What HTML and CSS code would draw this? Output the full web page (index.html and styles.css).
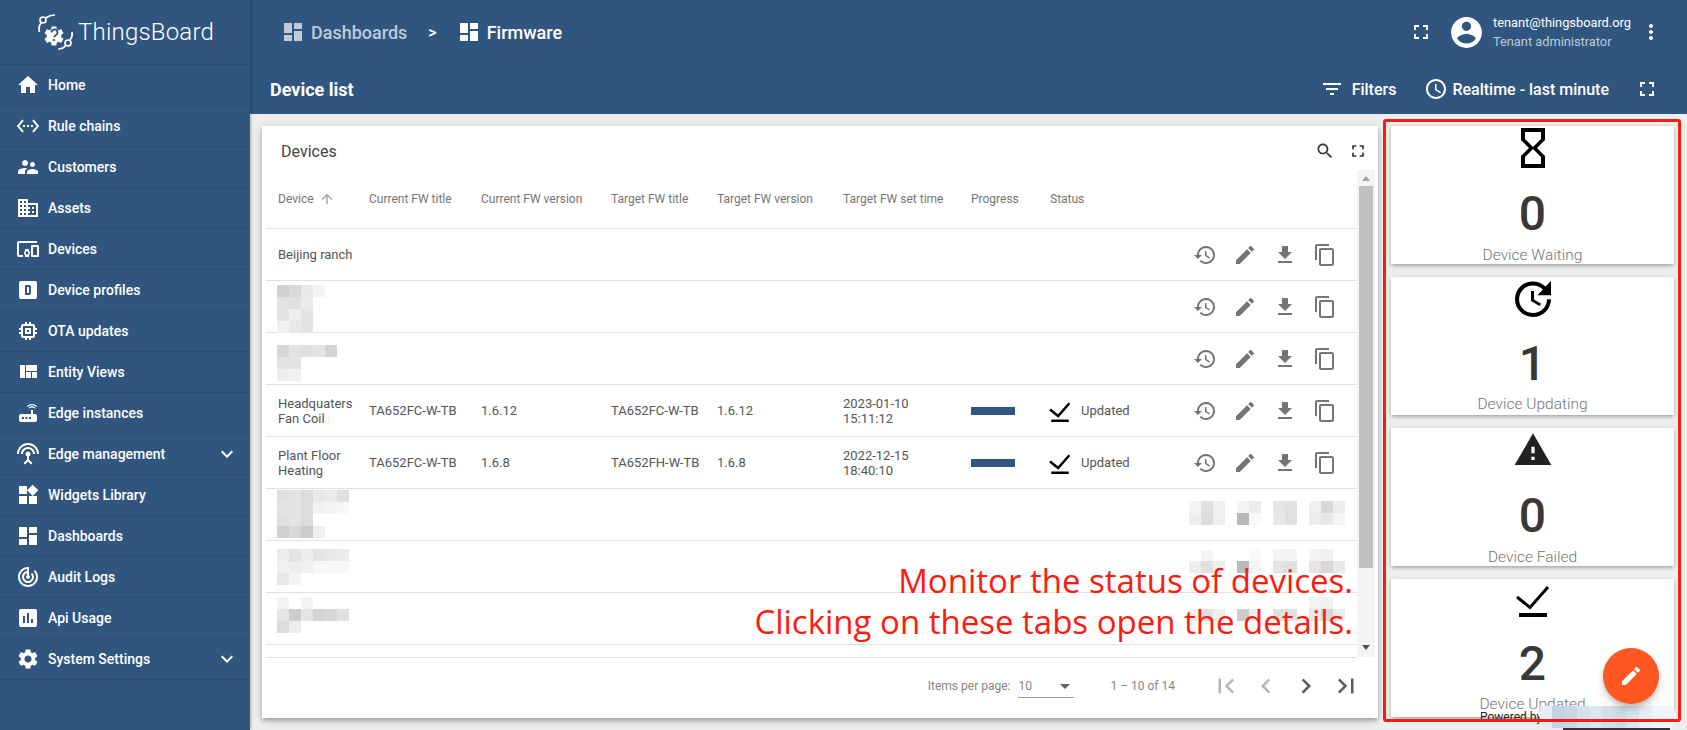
FILE: index.html
```html
<!DOCTYPE html>
<html lang="en">
<head>
  <meta charset="UTF-8" />
  <title>ThingsBoard | Firmware</title>
  <link rel="stylesheet" href="styles.css">
</head>
<body>
  <svg width="0" height="0" class="defs">
    <symbol id="i-full" viewBox="0 0 24 24"><path d="M7 14H5v5h5v-2H7v-3zm-2-4h2V7h3V5H5v5zm12 7h-3v2h5v-5h-2v3zM14 5v2h3v3h2V5h-5z"/></symbol>
    <symbol id="i-dash" viewBox="0 0 24 24"><path d="M3 13h8V3H3v10zm0 8h8v-6H3v6zm10 0h8V11h-8v10zm0-18v6h8V3h-8z"/></symbol>
    <symbol id="i-more" viewBox="0 0 24 24"><path d="M16.59 8.59L12 13.17 7.41 8.59 6 10l6 6 6-6z"/></symbol>
    <symbol id="i-history" viewBox="0 0 24 24"><path d="M13 3c-4.97 0-9 4.03-9 9H1l3.89 3.89.07.14L9 12H6c0-3.87 3.13-7 7-7s7 3.13 7 7-3.13 7-7 7c-1.93 0-3.68-.79-4.94-2.06l-1.42 1.42C8.27 19.99 10.51 21 13 21c4.97 0 9-4.03 9-9s-4.03-9-9-9zm-1 5v5l4.28 2.54.72-1.21-3.5-2.08V8H12z"/></symbol>
    <symbol id="i-edit" viewBox="0 0 24 24"><path d="M3 17.25V21h3.75L17.81 9.94l-3.75-3.75L3 17.25zM20.71 7.04c.39-.39.39-1.02 0-1.41l-2.34-2.34c-.39-.39-1.02-.39-1.41 0l-1.83 1.83 3.75 3.75 1.83-1.83z"/></symbol>
    <symbol id="i-down" viewBox="0 0 24 24"><path d="M19 9h-4V3H9v6H5l7 7 7-7zM5 18v2h14v-2H5z"/></symbol>
    <symbol id="i-copy" viewBox="0 0 24 24"><path d="M16 1H4c-1.1 0-2 .9-2 2v14h2V3h12V1zm3 4H8c-1.1 0-2 .9-2 2v14c0 1.1.9 2 2 2h11c1.1 0 2-.9 2-2V7c0-1.1-.9-2-2-2zm0 16H8V7h11v14z"/></symbol>
    <symbol id="i-check" viewBox="0 0 48 48"><path d="M8 20l13 10.5L39 10" fill="none" stroke="currentColor"/><rect x="10" y="36" width="28" height="4" fill="currentColor"/></symbol>
  </svg>

  <aside class="sidebar">
    <div class="logo">
      <svg class="logo-mark" viewBox="0 0 55 48" width="55" height="48">
        <g transform="translate(12 16) scale(1)" fill="#fff"><path d="M19.14 12.94c.04-.3.06-.61.06-.94 0-.32-.02-.64-.07-.94l2.03-1.58c.18-.14.23-.41.12-.61l-1.92-3.32c-.12-.22-.37-.29-.59-.22l-2.39.96c-.5-.38-1.03-.7-1.62-.94l-.36-2.54c-.04-.24-.24-.41-.48-.41h-3.84c-.24 0-.43.17-.47.41l-.36 2.54c-.59.24-1.13.57-1.62.94l-2.39-.96c-.22-.08-.47 0-.59.22L2.74 8.87c-.12.21-.08.47.12.61l2.03 1.58c-.05.3-.09.63-.09.94s.02.64.07.94l-2.03 1.58c-.18.14-.23.41-.12.61l1.92 3.32c.12.22.37.29.59.22l2.39-.96c.5.38 1.03.7 1.62.94l.36 2.54c.05.24.24.41.48.41h3.84c.24 0 .44-.17.47-.41l.36-2.54c.59-.24 1.13-.56 1.62-.94l2.39.96c.22.08.47 0 .59-.22l1.92-3.32c.12-.22.07-.47-.12-.61l-2.01-1.58z"/></g>
        <path d="M21.5 24.5a3 3 0 1 1 4 2.8l-1.5 2M23.8 31v2" fill="none" stroke="#305680" stroke-width="1.8"/>
        <g fill="none" stroke="#fff" stroke-width="1.7">
          <circle cx="13" cy="12" r="3"/>
          <circle cx="38" cy="35" r="3"/>
          <path d="M15.5 10Q20 7 25 7M11 15Q8 19 9.5 24M35.5 37.5Q33 41 28 41M40 32Q43 28 42 24"/>
        </g>
      </svg>
      <span class="logo-text">ThingsBoard</span>
    </div>
    <nav class="menu">
      <a class="menu-item"><svg class="icon" viewBox="0 0 24 24"><path d="M10 20v-6h4v6h5v-8h3L12 3 2 12h3v8z"/></svg>Home</a>
      <a class="menu-item"><svg class="icon" viewBox="0 0 24 24"><path d="M7.77 6.76L6.23 5.48.82 12l5.41 6.52 1.54-1.28L3.42 12l4.35-5.24zM7 13h2v-2H7v2zm10-2h-2v2h2v-2zm-6 2h2v-2h-2v2zm6.77-7.52l-1.54 1.28L20.58 12l-4.35 5.24 1.54 1.28L23.18 12l-5.41-6.52z"/></svg>Rule chains</a>
      <a class="menu-item"><svg class="icon" viewBox="0 0 24 24"><path d="M16.5 12c1.38 0 2.49-1.12 2.49-2.5S17.88 7 16.5 7C15.12 7 14 8.12 14 9.5s1.12 2.5 2.5 2.5zM9 11c1.66 0 2.99-1.34 2.99-3S10.66 5 9 5C7.34 5 6 6.34 6 8s1.34 3 3 3zm7.5 3c-1.83 0-5.5.92-5.5 2.75V19h11v-2.25c0-1.83-3.67-2.75-5.5-2.75zM9 13c-2.33 0-7 1.17-7 3.5V19h7v-2.25c0-.85.33-2.34 2.37-3.47C10.5 13.1 9.66 13 9 13z"/></svg>Customers</a>
      <a class="menu-item"><svg class="icon" viewBox="0 0 24 24"><path d="M12 7V3H2v18h20V7H12zM6 19H4v-2h2v2zm0-4H4v-2h2v2zm0-4H4V9h2v2zm0-4H4V5h2v2zm4 12H8v-2h2v2zm0-4H8v-2h2v2zm0-4H8V9h2v2zm0-4H8V5h2v2zm10 12h-8v-2h2v-2h-2v-2h2v-2h-2V9h8v10zm-2-8h-2v2h2v-2zm0 4h-2v2h2v-2z"/></svg>Assets</a>
      <a class="menu-item"><svg class="icon" viewBox="0 0 24 24"><path d="M3 6h18V4H3c-1.1 0-2 .9-2 2v12c0 1.1.9 2 2 2h4v-2H3V6zm10 6H9v1.78c-.61.55-1 1.33-1 2.22s.39 1.67 1 2.22V20h4v-1.78c.61-.55 1-1.34 1-2.22s-.39-1.67-1-2.22V12zm-2 5.5c-.83 0-1.5-.67-1.5-1.5s.67-1.5 1.5-1.5 1.5.67 1.5 1.5-.67 1.5-1.5 1.5zM22 8h-6c-.5 0-1 .5-1 1v10c0 .5.5 1 1 1h6c.5 0 1-.5 1-1V9c0-.5-.5-1-1-1zm-1 10h-4v-8h4v8z"/></svg>Devices</a>
      <a class="menu-item"><svg class="icon" viewBox="0 0 24 24"><path fill-rule="evenodd" d="M9 7v10h4a2 2 0 0 0 2-2V9a2 2 0 0 0-2-2H9zm2 2h2v6h-2V9zM5 3h14a2 2 0 0 1 2 2v14a2 2 0 0 1-2 2H5a2 2 0 0 1-2-2V5a2 2 0 0 1 2-2z"/></svg>Device profiles</a>
      <a class="menu-item"><svg class="icon" viewBox="0 0 24 24"><path d="M15 9H9v6h6V9zm-2 4h-2v-2h2v2zm8-2V9h-2V7c0-1.1-.9-2-2-2h-2V3h-2v2h-2V3H9v2H7c-1.1 0-2 .9-2 2v2H3v2h2v2H3v2h2v2c0 1.1.9 2 2 2h2v2h2v-2h2v2h2v-2h2c1.1 0 2-.9 2-2v-2h2v-2h-2v-2h2zm-4 6H7V7h10v10z"/></svg>OTA updates</a>
      <a class="menu-item"><svg class="icon" viewBox="0 0 24 24"><path d="M10 18h5v-6h-5v6zm-6 0h5V5H4v13zm12 0h5v-6h-5v6zM10 5v6h11V5H10z"/></svg>Entity Views</a>
      <a class="menu-item"><svg class="icon" viewBox="0 0 24 24"><path d="M20.2 5.9l.8-.8C19.6 3.7 17.8 3 16 3s-3.6.7-5 2.1l.8.8C13 4.8 14.5 4.2 16 4.2s3 .6 4.2 1.7zm-.9.8c-.9-.9-2.1-1.4-3.3-1.4s-2.4.5-3.3 1.4l.8.8c.7-.7 1.6-1 2.5-1 .9 0 1.8.3 2.5 1l.8-.8zM19 13h-2V9h-2v4H5c-1.1 0-2 .9-2 2v4c0 1.1.9 2 2 2h14c1.1 0 2-.9 2-2v-4c0-1.1-.9-2-2-2zM8 18H6v-2h2v2zm3.5 0h-2v-2h2v2zm3.5 0h-2v-2h2v2z"/></svg>Edge instances</a>
      <a class="menu-item"><svg class="icon" viewBox="0 0 24 24"><path d="M12 5c-3.87 0-7 3.13-7 7h2c0-2.76 2.24-5 5-5s5 2.24 5 5h2c0-3.87-3.13-7-7-7zm1 9.29c.88-.39 1.5-1.26 1.5-2.29 0-1.38-1.12-2.5-2.5-2.5S9.5 10.62 9.5 12c0 1.02.62 1.9 1.5 2.29v3.3L7.59 21 9 22.41l3-3 3 3L16.41 21 13 17.59v-3.3zM12 1C5.93 1 1 5.93 1 12h2c0-4.97 4.03-9 9-9s9 4.03 9 9h2c0-6.07-4.93-11-11-11z"/></svg>Edge management<svg class="icon chevron"><use href="#i-more"/></svg></a>
      <a class="menu-item"><svg class="icon" viewBox="0 0 24 24"><path d="M13 13v8h8v-8h-8zM3 21h8v-8H3v8zM3 3v8h8V3H3zm13.66-1.31L11 7.34 16.66 13l5.66-5.66-5.66-5.65z"/></svg>Widgets Library</a>
      <a class="menu-item"><svg class="icon"><use href="#i-dash"/></svg>Dashboards</a>
      <a class="menu-item"><svg class="icon" viewBox="0 0 24 24"><path d="M19.07 4.93l-1.41 1.41C19.1 7.79 20 9.79 20 12c0 4.42-3.58 8-8 8s-8-3.58-8-8c0-4.08 3.05-7.44 7-7.93v2.02C8.16 6.57 6 9.03 6 12c0 3.31 2.69 6 6 6s6-2.69 6-6c0-1.66-.67-3.16-1.76-4.24l-1.41 1.41C15.55 9.9 16 10.9 16 12c0 2.21-1.79 4-4 4s-4-1.79-4-4c0-1.86 1.28-3.41 3-3.86v2.14c-.6.35-1 .98-1 1.72 0 1.1.9 2 2 2s2-.9 2-2c0-.74-.4-1.38-1-1.72V2h-1C6.48 2 2 6.48 2 12s4.48 10 10 10 10-4.48 10-10c0-2.76-1.12-5.26-2.93-7.07z"/></svg>Audit Logs</a>
      <a class="menu-item"><svg class="icon" viewBox="0 0 24 24"><path d="M19 3H5c-1.1 0-2 .9-2 2v14c0 1.1.9 2 2 2h14c1.1 0 2-.9 2-2V5c0-1.1-.9-2-2-2zM9 17H7v-7h2v7zm4 0h-2V7h2v10zm4 0h-2v-4h2v4z"/></svg>Api Usage</a>
      <a class="menu-item"><svg class="icon" viewBox="0 0 24 24"><path d="M19.14 12.94c.04-.3.06-.61.06-.94 0-.32-.02-.64-.07-.94l2.03-1.58c.18-.14.23-.41.12-.61l-1.92-3.32c-.12-.22-.37-.29-.59-.22l-2.39.96c-.5-.38-1.03-.7-1.62-.94l-.36-2.54c-.04-.24-.24-.41-.48-.41h-3.84c-.24 0-.43.17-.47.41l-.36 2.54c-.59.24-1.13.57-1.62.94l-2.39-.96c-.22-.08-.47 0-.59.22L2.74 8.87c-.12.21-.08.47.12.61l2.03 1.58c-.05.3-.09.63-.09.94s.02.64.07.94l-2.03 1.58c-.18.14-.23.41-.12.61l1.92 3.32c.12.22.37.29.59.22l2.39-.96c.5.38 1.03.7 1.62.94l.36 2.54c.05.24.24.41.48.41h3.84c.24 0 .44-.17.47-.41l.36-2.54c.59-.24 1.13-.56 1.62-.94l2.39.96c.22.08.47 0 .59-.22l1.92-3.32c.12-.22.07-.47-.12-.61l-2.01-1.58zM12 15.6c-1.98 0-3.6-1.62-3.6-3.6s1.62-3.6 3.6-3.6 3.6 1.62 3.6 3.6-1.62 3.6-3.6 3.6z"/></svg>System Settings<svg class="icon chevron"><use href="#i-more"/></svg></a>
    </nav>
  </aside>

  <main class="main">
    <header class="topbar">
      <div class="crumbs">
        <span class="crumb crumb-muted"><svg class="icon"><use href="#i-dash"/></svg>Dashboards</span>
        <span class="crumb-sep">&gt;</span>
        <span class="crumb"><svg class="icon"><use href="#i-dash"/></svg>Firmware</span>
      </div>
      <div class="user-area">
        <svg class="icon"><use href="#i-full"/></svg>
        <svg class="avatar" viewBox="0 0 24 24"><path d="M12 2C6.48 2 2 6.48 2 12s4.48 10 10 10 10-4.48 10-10S17.52 2 12 2zm0 3c1.66 0 3 1.34 3 3s-1.34 3-3 3-3-1.34-3-3 1.34-3 3-3zm0 14.2c-2.5 0-4.71-1.28-6-3.22.03-1.99 4-3.08 6-3.08 1.99 0 5.97 1.09 6 3.08-1.29 1.94-3.5 3.22-6 3.22z"/></svg>
        <div class="user-info">
          <div class="user-mail">tenant@thingsboard.org</div>
          <div class="user-role">Tenant administrator</div>
        </div>
        <svg class="icon" viewBox="0 0 24 24"><path d="M12 8c1.1 0 2-.9 2-2s-.9-2-2-2-2 .9-2 2 .9 2 2 2zm0 2c-1.1 0-2 .9-2 2s.9 2 2 2 2-.9 2-2-.9-2-2-2zm0 6c-1.1 0-2 .9-2 2s.9 2 2 2 2-.9 2-2-.9-2-2-2z"/></svg>
      </div>
    </header>
    <div class="subbar">
      <div class="state-title">Device list</div>
      <div class="sub-actions">
        <span class="sub-btn filters"><svg class="icon" viewBox="0 0 24 24"><path d="M10 18h4v-2h-4v2zM3 6v2h18V6H3zm3 7h12v-2H6v2z"/></svg>Filters</span>
        <span class="sub-btn realtime"><svg class="icon" viewBox="0 0 24 24"><path d="M11.99 2C6.47 2 2 6.48 2 12s4.47 10 9.99 10C17.52 22 22 17.52 22 12S17.52 2 11.99 2zM12 20c-4.42 0-8-3.58-8-8s3.58-8 8-8 8 3.58 8 8-3.58 8-8 8zm.5-13H11v6l5.25 3.15.75-1.23-4.5-2.67z"/></svg>Realtime - last minute</span>
        <svg class="icon"><use href="#i-full"/></svg>
      </div>
    </div>

    <div class="content">
      <section class="panel">
        <div class="panel-head">
          <span class="panel-title">Devices</span>
          <span class="panel-tools">
            <svg class="tool" viewBox="0 0 24 24"><path d="M15.5 14h-.79l-.28-.27C15.41 12.59 16 11.11 16 9.5 16 5.91 13.09 3 9.5 3S3 5.91 3 9.5 5.91 16 9.5 16c1.61 0 3.09-.59 4.23-1.57l.27.28v.79l5 4.99L20.49 19l-4.99-5zm-6 0C7.01 14 5 11.99 5 9.5S7.01 5 9.5 5 14 7.01 14 9.5 11.99 14 9.5 14z"/></svg>
            <svg class="tool"><use href="#i-full"/></svg>
          </span>
        </div>

        <div class="table-wrap">
          <div class="table">
            <div class="row row-head">
              <span>Device <svg class="sort" viewBox="0 0 24 24"><path d="M4 12l1.41 1.41L11 7.83V20h2V7.83l5.58 5.59L20 12l-8-8-8 8z"/></svg></span>
              <span>Current FW title</span><span>Current FW version</span><span>Target FW title</span><span>Target FW version</span><span>Target FW set time</span><span>Progress</span><span>Status</span><span></span>
            </div>
            <div class="row">
              <span class="cell-name">Beijing ranch</span><span></span><span></span><span></span><span></span><span></span><span></span><span></span>
              <span class="row-actions"><svg><use href="#i-history"/></svg><svg><use href="#i-edit"/></svg><svg><use href="#i-down"/></svg><svg><use href="#i-copy"/></svg></span>
            </div>
            <div class="row">
              <span></span><span></span><span></span><span></span><span></span><span></span><span></span><span></span>
              <span class="row-actions"><svg><use href="#i-history"/></svg><svg><use href="#i-edit"/></svg><svg><use href="#i-down"/></svg><svg><use href="#i-copy"/></svg></span>
            </div>
            <div class="row">
              <span></span><span></span><span></span><span></span><span></span><span></span><span></span><span></span>
              <span class="row-actions"><svg><use href="#i-history"/></svg><svg><use href="#i-edit"/></svg><svg><use href="#i-down"/></svg><svg><use href="#i-copy"/></svg></span>
            </div>
            <div class="row">
              <span class="cell-name">Headquaters Fan Coil</span><span>TA652FC-W-TB</span><span>1.6.12</span><span>TA652FC-W-TB</span><span>1.6.12</span><span>2023-01-10<br>15:11:12</span>
              <span><i class="progress"></i></span>
              <span class="status"><svg><use href="#i-check"/></svg>Updated</span>
              <span class="row-actions"><svg><use href="#i-history"/></svg><svg><use href="#i-edit"/></svg><svg><use href="#i-down"/></svg><svg><use href="#i-copy"/></svg></span>
            </div>
            <div class="row">
              <span class="cell-name">Plant Floor Heating</span><span>TA652FC-W-TB</span><span>1.6.8</span><span>TA652FH-W-TB</span><span>1.6.8</span><span>2022-12-15<br>18:40:10</span>
              <span><i class="progress"></i></span>
              <span class="status"><svg><use href="#i-check"/></svg>Updated</span>
              <span class="row-actions"><svg><use href="#i-history"/></svg><svg><use href="#i-edit"/></svg><svg><use href="#i-down"/></svg><svg><use href="#i-copy"/></svg></span>
            </div>
            <div class="row"></div>
            <div class="row"></div>
            <div class="row"></div>
            <div class="row row-cut"></div>
          </div>
          <div class="scrollbar">
            <i class="arrow arrow-up"></i>
            <i class="thumb"></i>
            <i class="arrow arrow-down"></i>
          </div>
        </div>

        <div class="paginator">
          <span class="page-label">Items per page:</span>
          <span class="page-select">10<i class="caret"></i></span>
          <span class="page-range">1 – 10 of 14</span>
          <span class="page-nav">
            <svg class="off" viewBox="0 0 24 24"><path d="M18.41 16.59L13.82 12l4.59-4.59L17 6l-6 6 6 6zM6 6h2v12H6z"/></svg>
            <svg class="off" viewBox="0 0 24 24"><path d="M15.41 7.41L14 6l-6 6 6 6 1.41-1.41L10.83 12z"/></svg>
            <svg viewBox="0 0 24 24"><path d="M10 6L8.59 7.41 13.17 12l-4.58 4.59L10 18l6-6z"/></svg>
            <svg viewBox="0 0 24 24"><path d="M5.59 7.41L10.18 12l-4.59 4.59L7 18l6-6-6-6zM16 6h2v12h-2z"/></svg>
          </span>
        </div>
      </section>

      <section class="tiles">
        <div class="tile">
          <svg class="tile-icon" viewBox="0 0 24 24"><path d="M6 2v6h.01L6 8.01 10 12l-4 4 .01.01H6V22h12v-5.99h-.01L18 16l-4-4 4-3.99-.01-.01H18V2H6zm10 14.5V20H8v-3.5l4-4 4 4zm-4-5l-4-4V4h8v3.5l-4 4z"/></svg>
          <div class="tile-num">0</div>
          <div class="tile-label">Device Waiting</div>
        </div>
        <div class="tile tile-second">
          <svg class="tile-icon" viewBox="0 0 24 24"><path d="M21 10.12h-6.78l2.74-2.82c-2.73-2.7-7.15-2.8-9.88-.1-2.73 2.71-2.73 7.08 0 9.79s7.15 2.71 9.88 0C18.32 15.65 19 14.08 19 12.1h2c0 1.98-.88 4.55-2.64 6.29-3.51 3.48-9.21 3.48-12.72 0-3.5-3.47-3.53-9.11-.02-12.58s9.14-3.47 12.65 0L21 3v7.12zM12.5 8v4.25l3.5 2.08-.72 1.21L11 13V8h1.5z"/></svg>
          <div class="tile-num">1</div>
          <div class="tile-label">Device Updating</div>
        </div>
        <div class="tile">
          <svg class="tile-icon warn" viewBox="0 0 24 24"><path d="M1 21h22L12 2 1 21zm12-3h-2v-2h2v2zm0-4h-2v-4h2v4z"/></svg>
          <div class="tile-num">0</div>
          <div class="tile-label">Device Failed</div>
        </div>
        <div class="tile tile-last">
          <svg class="tile-icon"><use href="#i-check"/></svg>
          <div class="tile-num">2</div>
          <div class="tile-label">Device Updated</div>
        </div>
      </section>
    </div>
  </main>

  <!-- things painted over the screenshot: redaction blocks, note, red frame -->
  <svg class="mosaic" width="1687" height="730">
    <rect x="277" y="285" fill="#d0d0d0"/><rect x="289" y="285" fill="#d8d8d8"/><rect x="301" y="285" fill="#e8e8e8"/><rect x="313" y="285" fill="#f4f4f4"/>
    <rect x="277" y="297" fill="#e2e2e2"/><rect x="289" y="297" fill="#e0e0e0"/><rect x="301" y="297" fill="#eaeaea"/>
    <rect x="277" y="309" fill="#e4e4e4"/><rect x="289" y="309" fill="#eeeeee"/><rect x="301" y="309" fill="#e4e4e4"/>
    <rect x="277" y="321" fill="#f2f2f2"/><rect x="289" y="321" fill="#e8e8e8"/><rect x="301" y="321" fill="#e4e4e4"/>

    <rect x="277" y="345" fill="#d8d8d8"/><rect x="289" y="345" fill="#e4e4e4"/><rect x="301" y="345" fill="#e0e0e0"/><rect x="313" y="345" fill="#e4e4e4"/><rect x="325" y="345" fill="#d4d4d4"/>
    <rect x="277" y="357" fill="#e4e4e4"/><rect x="289" y="357" fill="#e4e4e4"/>
    <rect x="277" y="369" fill="#eeeeee"/><rect x="289" y="369" fill="#f0f0f0"/>

    <rect x="277" y="490" fill="#e0e0e0"/><rect x="289" y="490" fill="#e4e4e4"/><rect x="301" y="490" fill="#dcdcdc"/><rect x="313" y="490" fill="#e8e8e8"/><rect x="325" y="490" fill="#ececec"/><rect x="337" y="490" fill="#e0e0e0"/>
    <rect x="277" y="502" fill="#e4e4e4"/><rect x="289" y="502" fill="#e4e4e4"/><rect x="301" y="502" fill="#dcdcdc"/><rect x="313" y="502" fill="#f2f2f2"/><rect x="325" y="502" fill="#f4f4f4"/><rect x="337" y="502" fill="#f8f8f8"/>
    <rect x="277" y="514" fill="#e0e0e0"/><rect x="289" y="514" fill="#e4e4e4"/><rect x="301" y="514" fill="#dcdcdc"/>
    <rect x="277" y="526" fill="#d0d0d0"/><rect x="289" y="526" fill="#d8d8d8"/><rect x="301" y="526" fill="#cccccc"/><rect x="313" y="526" fill="#f0f0f0"/>

    <rect x="277" y="549" fill="#ececec"/><rect x="289" y="549" fill="#e4e4e4"/><rect x="301" y="549" fill="#ececec"/><rect x="313" y="549" fill="#e4e4e4"/><rect x="325" y="549" fill="#e8e8e8"/><rect x="337" y="549" fill="#ececec"/>
    <rect x="277" y="561" fill="#f0f0f0"/><rect x="289" y="561" fill="#ececec"/><rect x="301" y="561" fill="#f0f0f0"/><rect x="313" y="561" fill="#f8f8f8"/><rect x="325" y="561" fill="#f8f8f8"/><rect x="337" y="561" fill="#f8f8f8"/>
    <rect x="277" y="573" fill="#e8e8e8"/><rect x="289" y="573" fill="#f4f4f4"/>

    <rect x="277" y="597" fill="#f4f4f4"/><rect x="301" y="597" fill="#f4f4f4"/>
    <rect x="277" y="609" fill="#e4e4e4"/><rect x="289" y="609" fill="#cccccc"/><rect x="301" y="609" fill="#e4e4e4"/><rect x="313" y="609" fill="#d4d4d4"/><rect x="325" y="609" fill="#d8d8d8"/><rect x="337" y="609" fill="#e0e0e0"/>
    <rect x="277" y="621" fill="#dcdcdc"/><rect x="289" y="621" fill="#eeeeee"/>

    <rect x="1189" y="501" fill="#f4f4f4"/><rect x="1201" y="501" fill="#e0e0e0"/><rect x="1213" y="501" fill="#f0f0f0"/>
    <rect x="1189" y="513" fill="#eeeeee"/><rect x="1201" y="513" fill="#dcdcdc"/><rect x="1213" y="513" fill="#eeeeee"/>
    <rect x="1237" y="501" fill="#f4f4f4"/><rect x="1249" y="501" fill="#ececec"/><rect x="1237" y="513" fill="#b8b8b8"/><rect x="1249" y="513" fill="#fafafa"/>
    <rect x="1273" y="501" fill="#e4e4e4"/><rect x="1285" y="501" fill="#e0e0e0"/><rect x="1273" y="513" fill="#e8e8e8"/><rect x="1285" y="513" fill="#e0e0e0"/>
    <rect x="1309" y="501" fill="#f0f0f0"/><rect x="1321" y="501" fill="#d8d8d8"/><rect x="1333" y="501" fill="#ececec"/>
    <rect x="1309" y="513" fill="#ececec"/><rect x="1321" y="513" fill="#e8e8e8"/><rect x="1333" y="513" fill="#f4f4f4"/>

    <rect x="1201" y="550" fill="#f4f4f4"/><rect x="1189" y="561" fill="#eeeeee"/><rect x="1201" y="561" fill="#e0e0e0"/><rect x="1213" y="561" fill="#eeeeee"/>
    <rect x="1237" y="561" fill="#bbbbbb"/><rect x="1249" y="561" fill="#f4f4f4"/><rect x="1249" y="549" fill="#f8f8f8"/>
    <rect x="1273" y="561" fill="#e4e4e4"/><rect x="1285" y="561" fill="#e0e0e0"/><rect x="1273" y="549" fill="#f4f4f4"/><rect x="1285" y="549" fill="#f4f4f4"/>
    <rect x="1309" y="561" fill="#e4e4e4"/><rect x="1321" y="561" fill="#d8d8d8"/><rect x="1333" y="561" fill="#e8e8e8"/><rect x="1309" y="549" fill="#f4f4f4"/><rect x="1321" y="549" fill="#f0f0f0"/>

    <rect x="1309" y="597" fill="#f4f4f4"/><rect x="1321" y="597" fill="#f0f0f0"/>
    <rect x="1189" y="609" fill="#f0f0f0"/><rect x="1201" y="609" fill="#e0e0e0"/><rect x="1213" y="609" fill="#eeeeee"/>
    <rect x="1237" y="609" fill="#cccccc"/><rect x="1249" y="609" fill="#eeeeee"/>
    <rect x="1273" y="609" fill="#e0e0e0"/><rect x="1285" y="609" fill="#e0e0e0"/>
    <rect x="1309" y="609" fill="#e8e8e8"/><rect x="1321" y="609" fill="#d8d8d8"/><rect x="1333" y="609" fill="#ececec"/>
  </svg>

  <div class="powered">Powered by</div>
  <div class="powered-blur">
    <i class="b1"></i><i class="b2"></i><i class="b3"></i><i class="b4"></i><i class="b5"></i><i class="b6"></i><i class="b7"></i><i class="b8"></i><i class="b9"></i><i class="b10"></i><i class="b11"></i>
  </div>
  <div class="powered-edge"></div>

  <div class="fab"><svg viewBox="0 0 24 24"><use href="#i-edit"/></svg></div>
  <div class="note">Monitor the status of devices.<br>Clicking on these tabs open the details.</div>
  <div class="red-frame"></div>
</body>
</html>
```

FILE: styles.css
```css
* { box-sizing: border-box; }

body {
  margin: 0;
  width: 1687px;
  height: 730px;
  overflow: hidden;
  display: flex;
  position: relative;
  font-family: Roboto, "Liberation Sans", sans-serif;
  background: #eeeeee;
  color: #333;
}

.defs { position: absolute; }

.icon { width: 24px; height: 24px; fill: #fff; flex: none; }

/* sidebar */
.sidebar {
  width: 250px;
  flex: none;
  background: #305680;
  color: #fff;
  box-shadow: 1px 0 3px rgba(0, 0, 0, 0.25);
  z-index: 2;
}
.logo { height: 65px; display: flex; align-items: center; padding: 0 0 0 30px; border-bottom: 1px solid #2a4c72; }
.logo-mark { flex: none; margin-right: -7px; }
.logo-text { font-size: 24px; font-weight: 300; letter-spacing: 0.2px; }
.menu-item {
  height: 41px;
  display: flex;
  align-items: center;
  gap: 8px;
  padding: 0 11px 0 16px;
  font-size: 14px;
  font-weight: 500;
  border-bottom: 1px solid #2a4c72;
}
.chevron { margin-left: auto; }

/* top bars */
.main { flex: 1; display: flex; flex-direction: column; min-width: 0; }
.topbar, .subbar { background: #305680; color: #fff; display: flex; align-items: center; }
.topbar { height: 64px; padding: 0 24px 0 31px; }
.crumbs { display: flex; align-items: center; font-size: 18px; font-weight: 500; }
.crumb { display: flex; align-items: center; gap: 6px; }
.crumb-muted { color: rgba(255, 255, 255, 0.7); }
.crumb-muted .icon { fill: rgba(255, 255, 255, 0.7); }
.crumb-sep { margin: 0 20px 0 21px; font-size: 16px; }
.user-area { margin-left: auto; display: flex; align-items: center; }
.avatar { width: 37px; height: 37px; fill: #fff; margin: 0 8px 0 15px; }
.user-info { width: 138px; margin-right: 8px; font-size: 12.8px; }
.user-mail { line-height: 19px; white-space: nowrap; }
.user-role { line-height: 20px; color: rgba(255, 255, 255, 0.7); white-space: nowrap; }

.subbar { height: 50px; padding: 0 28px 0 20px; }
.state-title { font-size: 18px; font-weight: 700; }
.sub-actions { margin-left: auto; display: flex; align-items: center; font-size: 16px; font-weight: 500; }
.sub-btn { display: flex; align-items: center; }
.filters { gap: 8px; margin-right: 28px; }
.realtime { gap: 4px; margin-right: 26px; }

/* content */
.content { flex: 1; display: flex; gap: 13px; padding: 12px 0 0 12px; min-height: 0; }

.panel {
  width: 1116px;
  height: 592px;
  background: #fff;
  box-shadow: 0 2px 4px -1px rgba(0, 0, 0, 0.2), 0 4px 5px rgba(0, 0, 0, 0.14), 0 1px 10px rgba(0, 0, 0, 0.12);
  display: flex;
  flex-direction: column;
}
.panel-head { height: 44px; padding: 6px 10px 0 19px; display: flex; align-items: center; justify-content: space-between; flex: none; }
.panel-title { font-size: 16px; color: #444; }
.panel-tools { display: flex; gap: 13px; }
.tool { width: 20px; height: 20px; fill: #333; display: block; }

.table-wrap { display: flex; margin: 0 3px 0 4px; height: 488px; flex: none; }
.table { width: 1091px; flex: none; }
.row {
  display: grid;
  grid-template-columns: 91px 112px 130px 106px 126px 128px 79px 135px 160px;
  align-items: center;
  height: 52px;
  padding: 0 12px;
  border-bottom: 1px solid #e0e0e0;
  font-size: 13px;
  line-height: 15px;
  color: #555;
}
.row-head { height: 59px; color: #757575; font-size: 12px; }
.row-cut { height: 13px; }
.sort { width: 16px; height: 16px; fill: #9e9e9e; vertical-align: -4px; margin-left: 2px; }
.cell-name { padding-right: 4px; }
.row-actions { display: flex; justify-content: flex-end; margin-top: 1px; }
.row-actions svg { width: 24px; height: 24px; margin: 0 8px; fill: #757575; }
.progress { display: block; width: 44px; height: 8px; background: #305680; }
.status { display: flex; align-items: center; gap: 6px; margin-left: -5px; }
.status svg { width: 30px; height: 30px; color: #000; margin-top: 3px; stroke-width: 4; }

.scrollbar { width: 18px; background: #f4f4f4; display: flex; flex-direction: column; align-items: center; height: 487px; }
.arrow { width: 0; height: 0; border-left: 4px solid transparent; border-right: 4px solid transparent; }
.arrow-up { border-bottom: 5px solid #a3a3a3; margin: 6px 0 5px; }
.thumb { width: 14px; height: 382px; background: #c1c1c1; }
.arrow-down { border-top: 5px solid #505050; margin-top: auto; margin-bottom: 7px; }

.paginator { flex: 1; display: flex; align-items: center; justify-content: flex-end; padding: 0 12px 4px 0; font-size: 12px; color: #858585; }
.page-select {
  width: 56px;
  height: 24px;
  line-height: 24px;
  margin: 0 36px 0 8px;
  border-bottom: 1px solid #9e9e9e;
  position: relative;
}
.caret { position: absolute; right: 4px; top: 10px; width: 0; height: 0; border-left: 5px solid transparent; border-right: 5px solid transparent; border-top: 5px solid #616161; }
.page-range { margin-right: 31px; }
.page-nav { display: flex; }
.page-nav svg { width: 30px; height: 30px; margin: 0 5px; fill: #5a5a5a; }
.page-nav .off { fill: #b5b5b5; }

/* status tiles */
.tiles { width: 283px; display: flex; flex-direction: column; gap: 13px; }
.tile {
  height: 138px;
  background: #fff;
  text-align: center;
  box-shadow: 0 2px 4px -1px rgba(0, 0, 0, 0.3), 0 1px 5px rgba(0, 0, 0, 0.14);
  display: flex;
  flex-direction: column;
  align-items: center;
}
.tile-icon { width: 48px; height: 48px; margin-top: -2px; flex: none; fill: #000; color: #000; stroke-width: 3; }
.tile-icon.warn { width: 40px; height: 40px; margin: 2px 0 4px; fill: #222; }
.tile-num { font-size: 48px; font-weight: 500; line-height: 56px; margin-top: 14px; color: #383838; }
.tile-label { font-size: 15.5px; line-height: 20px; margin-top: 3px; color: #757575; font-weight: 300; }
.tile-second .tile-num { margin-top: 13px; }
.tile-second .tile-label { margin-top: 2px; }
.tile-last .tile-num { margin-top: 11px; }
.tile-last .tile-label { margin-top: 2px; }

/* painted over the shot */
.mosaic { position: absolute; left: 0; top: 0; pointer-events: none; z-index: 3; shape-rendering: crispEdges; }
.mosaic rect { width: 12px; height: 12px; }

.powered { position: absolute; left: 1480px; top: 710px; font-size: 12px; line-height: 14px; color: #222; z-index: 3; }
.powered-blur { position: absolute; left: 1540px; top: 706px; width: 136px; height: 22px; display: flex; overflow: hidden; border-radius: 0 8px 8px 8px; z-index: 3; background: #dfe7f0; }
.powered-blur i { width: 12.4px; height: 22px; flex: none; }
.b1 { background: #e8edf3; }
.b2 { background: #c3d3e3; }
.b3 { background: #c8d6e6; }
.b4 { background: #d4e0ec; }
.b5 { background: #dde7f1; }
.b6 { background: #d3deea; }
.b7 { background: #cfdbe7; }
.b8 { background: #dce6f0; }
.b9 { background: #e8eef6; }
.b10 { background: #eff3fa; }
.b11 { background: #f2f4f8; }
.powered-edge { position: absolute; left: 1563px; top: 728px; width: 107px; height: 2px; background: #333; z-index: 3; }

.fab {
  position: absolute;
  left: 1603px;
  top: 648px;
  width: 56px;
  height: 56px;
  border-radius: 50%;
  background: #ff5722;
  box-shadow: 0 3px 5px -1px rgba(0, 0, 0, 0.2), 0 6px 10px rgba(0, 0, 0, 0.14);
  display: flex;
  align-items: center;
  justify-content: center;
  z-index: 4;
}
.fab svg { width: 24px; height: 24px; fill: #fff; }

.note {
  position: absolute;
  right: 334px;
  top: 560px;
  text-align: right;
  font-family: "Open Sans", "Noto Sans", sans-serif;
  font-size: 33px;
  line-height: 41px;
  color: #ff1a0f;
  white-space: nowrap;
  z-index: 5;
}

.red-frame {
  position: absolute;
  left: 1383px;
  top: 119px;
  width: 298px;
  height: 603px;
  border: 3px solid #ff1a0f;
  border-radius: 3px;
  z-index: 5;
}
```
